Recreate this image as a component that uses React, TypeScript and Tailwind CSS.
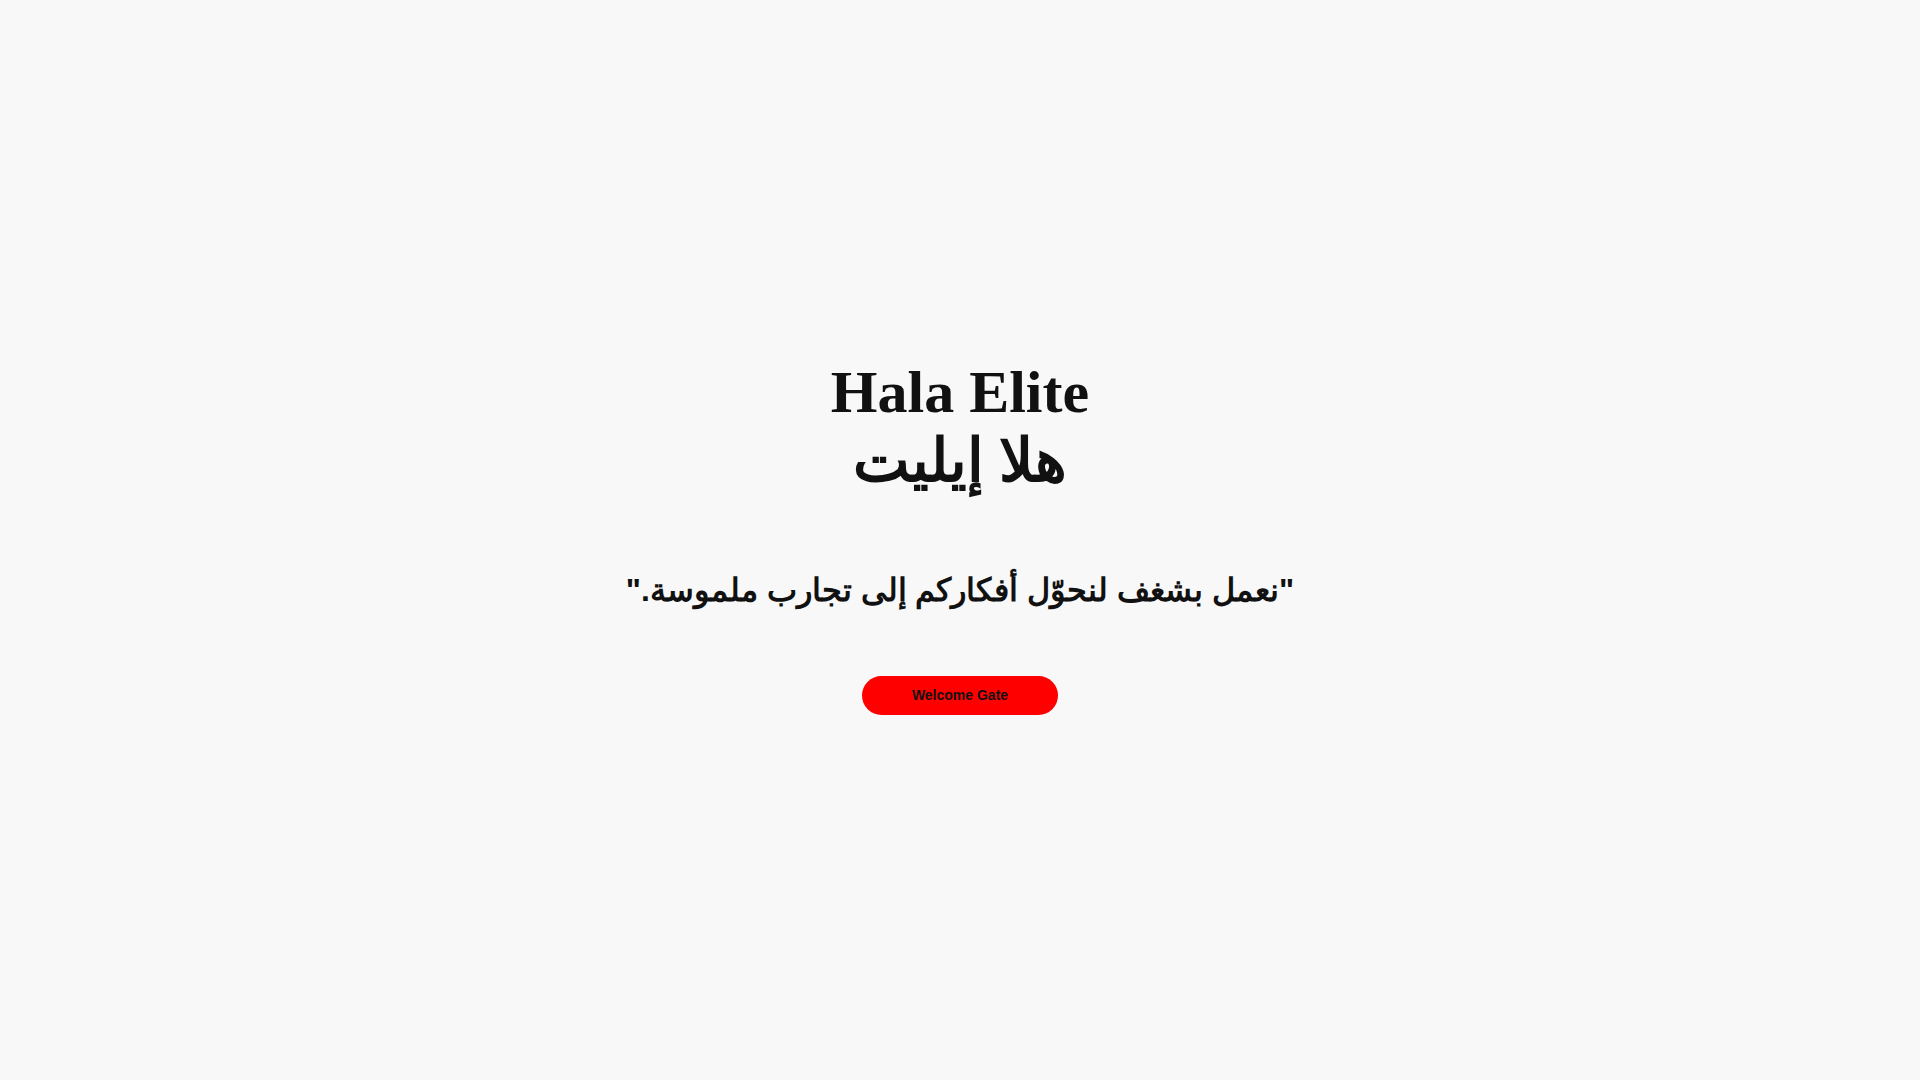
export default function App() {
  return (
    <div className="flex min-h-screen flex-col items-center justify-center bg-[#f8f8f8] pb-[8px] text-[#111111]">
      <h1 className="text-center font-['Liberation_Serif',serif] text-[60px] font-bold leading-[69px]">
        Hala Elite
        <br />
        <span dir="rtl">هلا إيليت</span>
      </h1>
      <p
        dir="rtl"
        className="mt-[76px] text-center font-['Liberation_Sans',sans-serif] text-[32px] font-bold leading-[37px]"
      >
        "نعمل بشغف لنحوّل أفكاركم إلى تجارب ملموسة."
      </p>
      <button className="mt-[67px] flex h-[39px] w-[196px] items-center justify-center rounded-full bg-[#ff0000] font-['Liberation_Sans',Arial,sans-serif] text-[14px] font-bold text-[#111111]">
        Welcome Gate
      </button>
    </div>
  );
}
